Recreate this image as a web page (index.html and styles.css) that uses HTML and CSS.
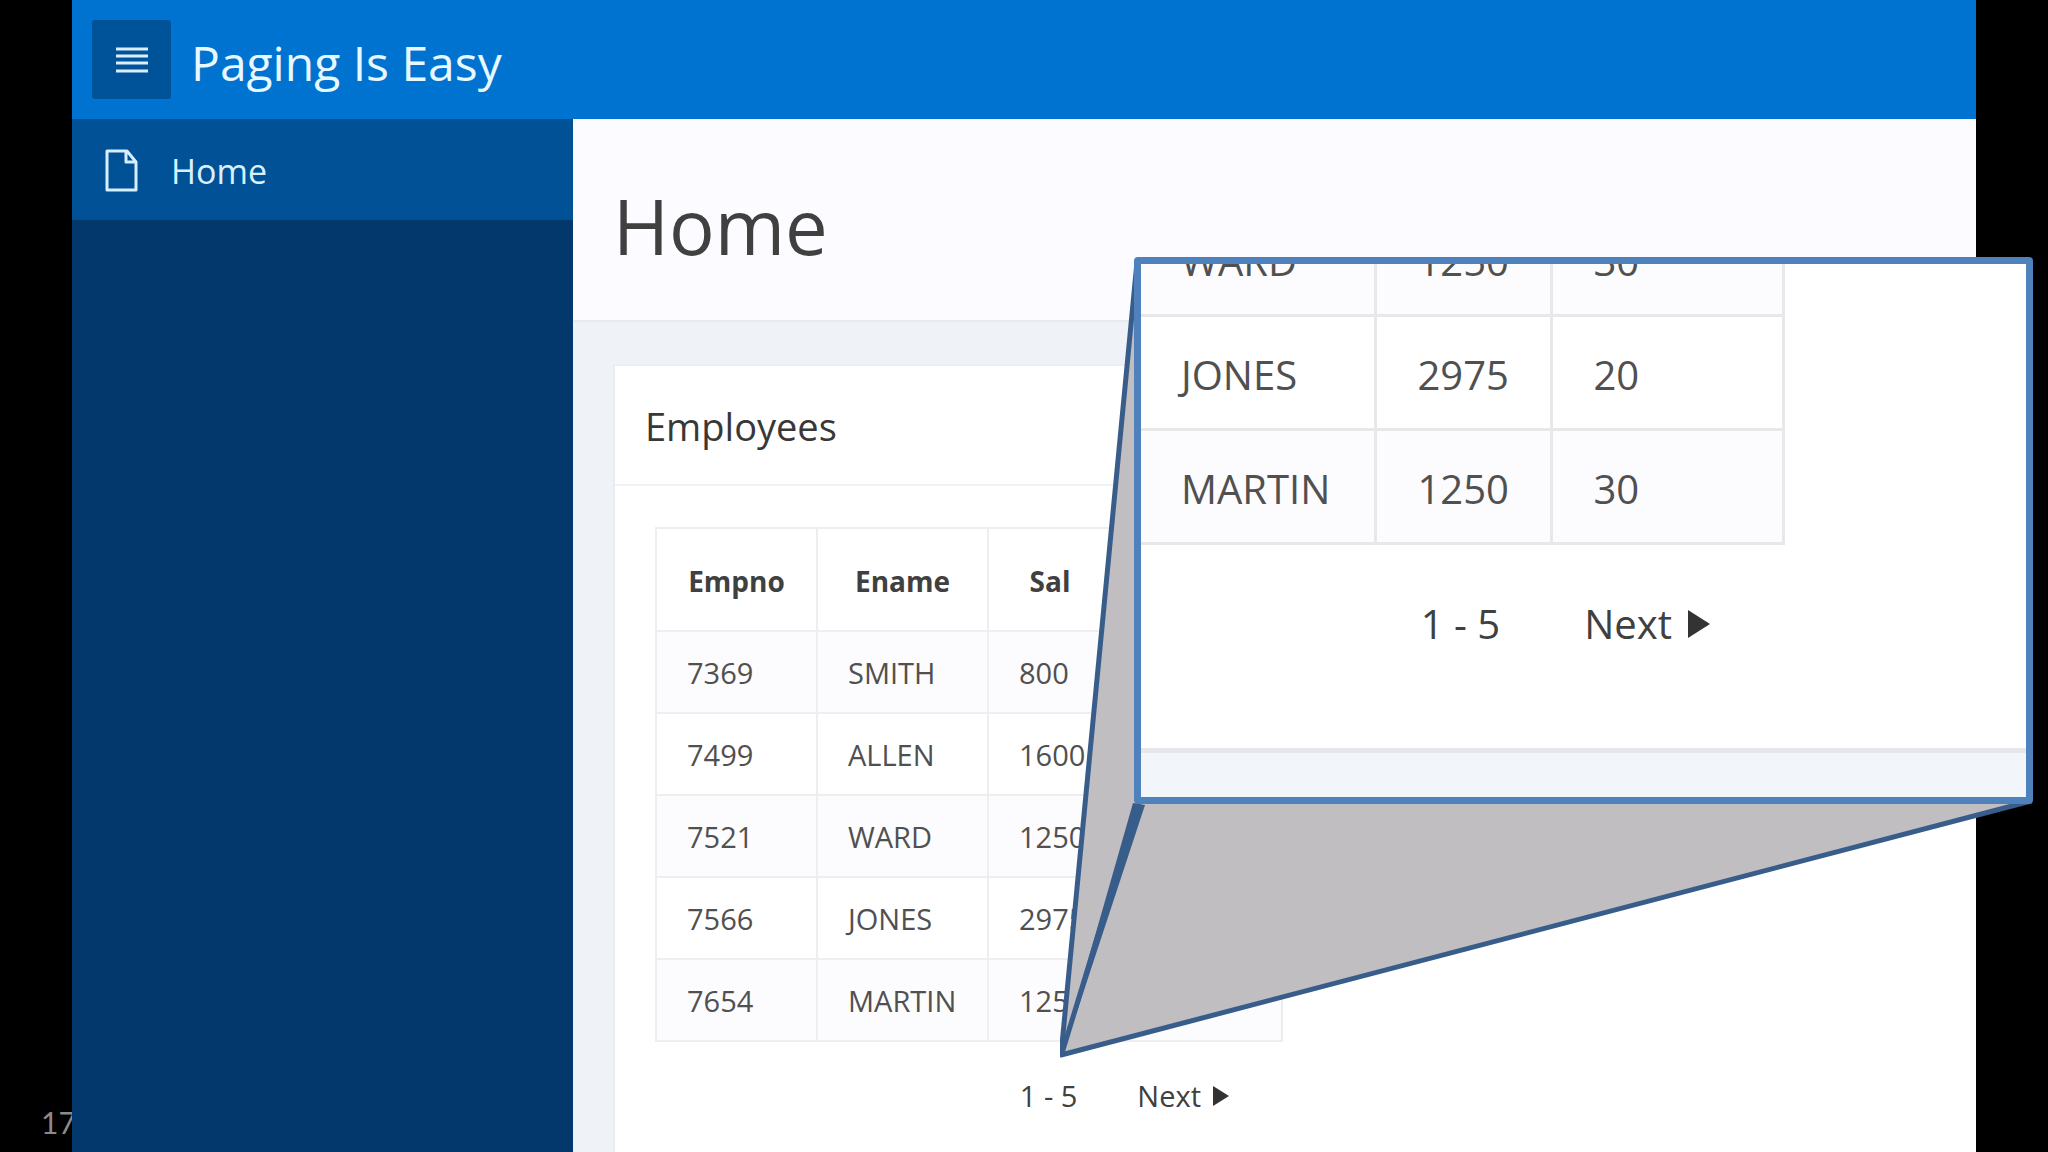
FILE: index.html
```html
<!DOCTYPE html>
<html lang="en">
<head>
<meta charset="utf-8">
<title>Paging Is Easy</title>
<link rel="stylesheet" href="styles.css">
</head>
<body>
<div class="slide">
  <span class="slide-number">17</span>
  <div class="app">
    <header class="topbar">
      <button class="menu-button" type="button" aria-label="Menu">
        <svg width="32" height="28" viewBox="0 0 32 28" aria-hidden="true"><path d="M0 3h32M0 10h32M0 17h32M0 25h32" stroke="#d9efff" stroke-width="3"/></svg>
      </button>
      <span class="app-title">Paging Is Easy</span>
    </header>
    <div class="body">
      <nav class="sidebar">
        <a class="nav-item" href="#">
          <svg width="34" height="44" viewBox="0 0 34 44" fill="none" stroke="#d5efff" stroke-width="3" stroke-linejoin="round" aria-hidden="true"><path d="M2 2h20l9 11v28H2zM21 2v11h10"/></svg>
          <span>Home</span>
        </a>
      </nav>
      <main class="content">
        <div class="page-head"><h1>Home</h1></div>
        <section class="card">
          <h2>Employees</h2>
          <div class="report">
            <table class="grid">
              <colgroup><col class="c-no"><col class="c-name"><col class="c-sal"><col></colgroup>
              <thead><tr><th>Empno</th><th>Ename</th><th>Sal</th><th>Deptno</th></tr></thead>
              <tbody>
                <tr><td>7369</td><td>SMITH</td><td>800</td><td>20</td></tr>
                <tr><td>7499</td><td>ALLEN</td><td>1600</td><td>30</td></tr>
                <tr><td>7521</td><td>WARD</td><td>1250</td><td>30</td></tr>
                <tr><td>7566</td><td>JONES</td><td>2975</td><td>20</td></tr>
                <tr><td>7654</td><td>MARTIN</td><td>1250</td><td>30</td></tr>
              </tbody>
            </table>
            <div class="pager"><span>1 - 5</span><a href="#">Next<svg width="16" height="20" viewBox="0 0 16 20" aria-hidden="true"><path d="M0 0l16 10L0 20z" fill="#333"/></svg></a></div>
          </div>
        </section>
      </main>
    </div>
  </div>

  <svg class="rays" width="974" height="806" viewBox="0 0 974 806" aria-hidden="true">
    <path d="M77 7L1 800 79 549V7z" fill="#c0bec0"/>
    <path d="M79 549L1 800 971 547z" fill="#c0bec0"/>
    <path d="M77 7L1 800 971 546" fill="none" stroke="#385d8a" stroke-width="5" stroke-linejoin="round"/>
    <path d="M73 548L85 550 6 790 1 800z" fill="#385d8a"/>
    <path d="M79 546L2 798" fill="none" stroke="#385d8a" stroke-width="5"/>
  </svg>

  <div class="callout">
    <table class="grid zoomed">
      <colgroup><col class="z-name"><col class="z-sal"><col></colgroup>
      <tbody>
        <tr><td>WARD</td><td>1250</td><td>30</td></tr>
        <tr><td>JONES</td><td>2975</td><td>20</td></tr>
        <tr><td>MARTIN</td><td>1250</td><td>30</td></tr>
      </tbody>
    </table>
    <div class="pager zoomed-pager"><span>1 - 5</span><a href="#">Next<svg width="22" height="28" viewBox="0 0 22 28" aria-hidden="true"><path d="M0 0l22 14L0 28z" fill="#333"/></svg></a></div>
    <div class="callout-foot"></div>
  </div>
</div>
</body>
</html>
```
FILE: styles.css
```css
* { box-sizing: border-box; }
body { margin: 0; background: #000; font-family: "Open Sans", "Noto Sans", sans-serif; color: #404040; }
a { color: inherit; text-decoration: none; }
svg { display: block; flex: none; }

.slide { position: relative; height: 100vh; padding: 0 72px; overflow: hidden; }
.slide-number { position: absolute; left: 41px; bottom: 10px; font: 30px/40px Lato, sans-serif; color: #8b8b8b; }

.app { position: relative; display: flex; flex-direction: column; min-height: 100%; background: #eff3f7; }
.topbar { display: flex; align-items: flex-start; gap: 20px; height: 119px; padding: 20px; background: #0072d0; }
.menu-button { display: grid; place-items: center; width: 79px; height: 79px; border: 0; border-radius: 3px; background: #005399; }
.app-title { font-size: 48px; line-height: 86px; color: #e8f8ff; }

.body { display: flex; flex: 1; }
.sidebar { width: 501px; flex: none; background: #02386b; }
.nav-item { display: flex; align-items: center; gap: 32px; height: 101px; padding: 2px 0 0 33px; background: #005196; color: #d9f0ff; font-size: 34px; line-height: 50px; }
.content { display: flex; flex: 1; flex-direction: column; min-width: 0; }
.page-head { height: 203px; padding: 53px 40px 0; background: #fcfbff; border-bottom: 2px solid #e6e9ed; }
h1 { margin: 0; font-size: 76px; font-weight: 400; line-height: 108px; }
.card { flex: 1; margin: 42px 0 0 40px; background: #fff; border-left: 2px solid #e9edf0; border-top: 2px solid #ebeef2; }
h2 { margin: 0; padding: 34px 30px 32px; font-size: 38px; font-weight: 400; line-height: 52px; border-bottom: 2px solid #f0f1f4; color: #383838; }
.report { width: 708px; padding: 41px 40px 0; }

.grid { width: 100%; border-collapse: collapse; table-layout: fixed; font-size: 29px; line-height: 40px; color: #505050; }
.grid th, .grid td { border: 2px solid #f0edf1; padding: 0 30px; text-align: left; }
.grid th { height: 103px; padding: 2px 0 0; font-size: 28px; font-weight: 700; text-align: center; color: #404040; }
.grid td { height: 82px; padding-top: 2px; }
.grid tbody tr:nth-child(odd) { background: #fcfbfd; }
.c-no { width: 161px; }
.c-name { width: 171px; }
.c-sal { width: 124px; }

.pager { display: flex; align-items: center; justify-content: flex-end; gap: 60px; padding: 34px 54px 0 0; font-size: 29px; line-height: 40px; }
.pager a { display: flex; align-items: center; gap: 12px; }

.rays { position: absolute; left: 1060px; top: 255px; }
.callout { position: absolute; left: 1134px; top: 257px; width: 899px; height: 547px; display: flex; flex-direction: column; justify-content: flex-end; overflow: hidden; background: #fff; border: 7px solid #4f81bd; border-radius: 4px; }
.zoomed { width: 644px; flex: none; font-size: 40px; line-height: 56px; }
.zoomed td { height: 114px; border: 3px solid #e8e8eb; padding: 4px 38px 0 41px; }
.zoomed td:first-child { border-left: 0; padding-left: 40px; }
.z-name { width: 234px; }
.z-sal { width: 176px; }
.zoomed-pager { width: 644px; gap: 84px; padding: 49px 75px 94px 0; font-size: 40px; line-height: 60px; }
.zoomed-pager a { gap: 16px; }
.callout-foot { height: 49px; flex: none; background: #f2f5fa; border-top: 5px solid #e5e7eb; }
```
